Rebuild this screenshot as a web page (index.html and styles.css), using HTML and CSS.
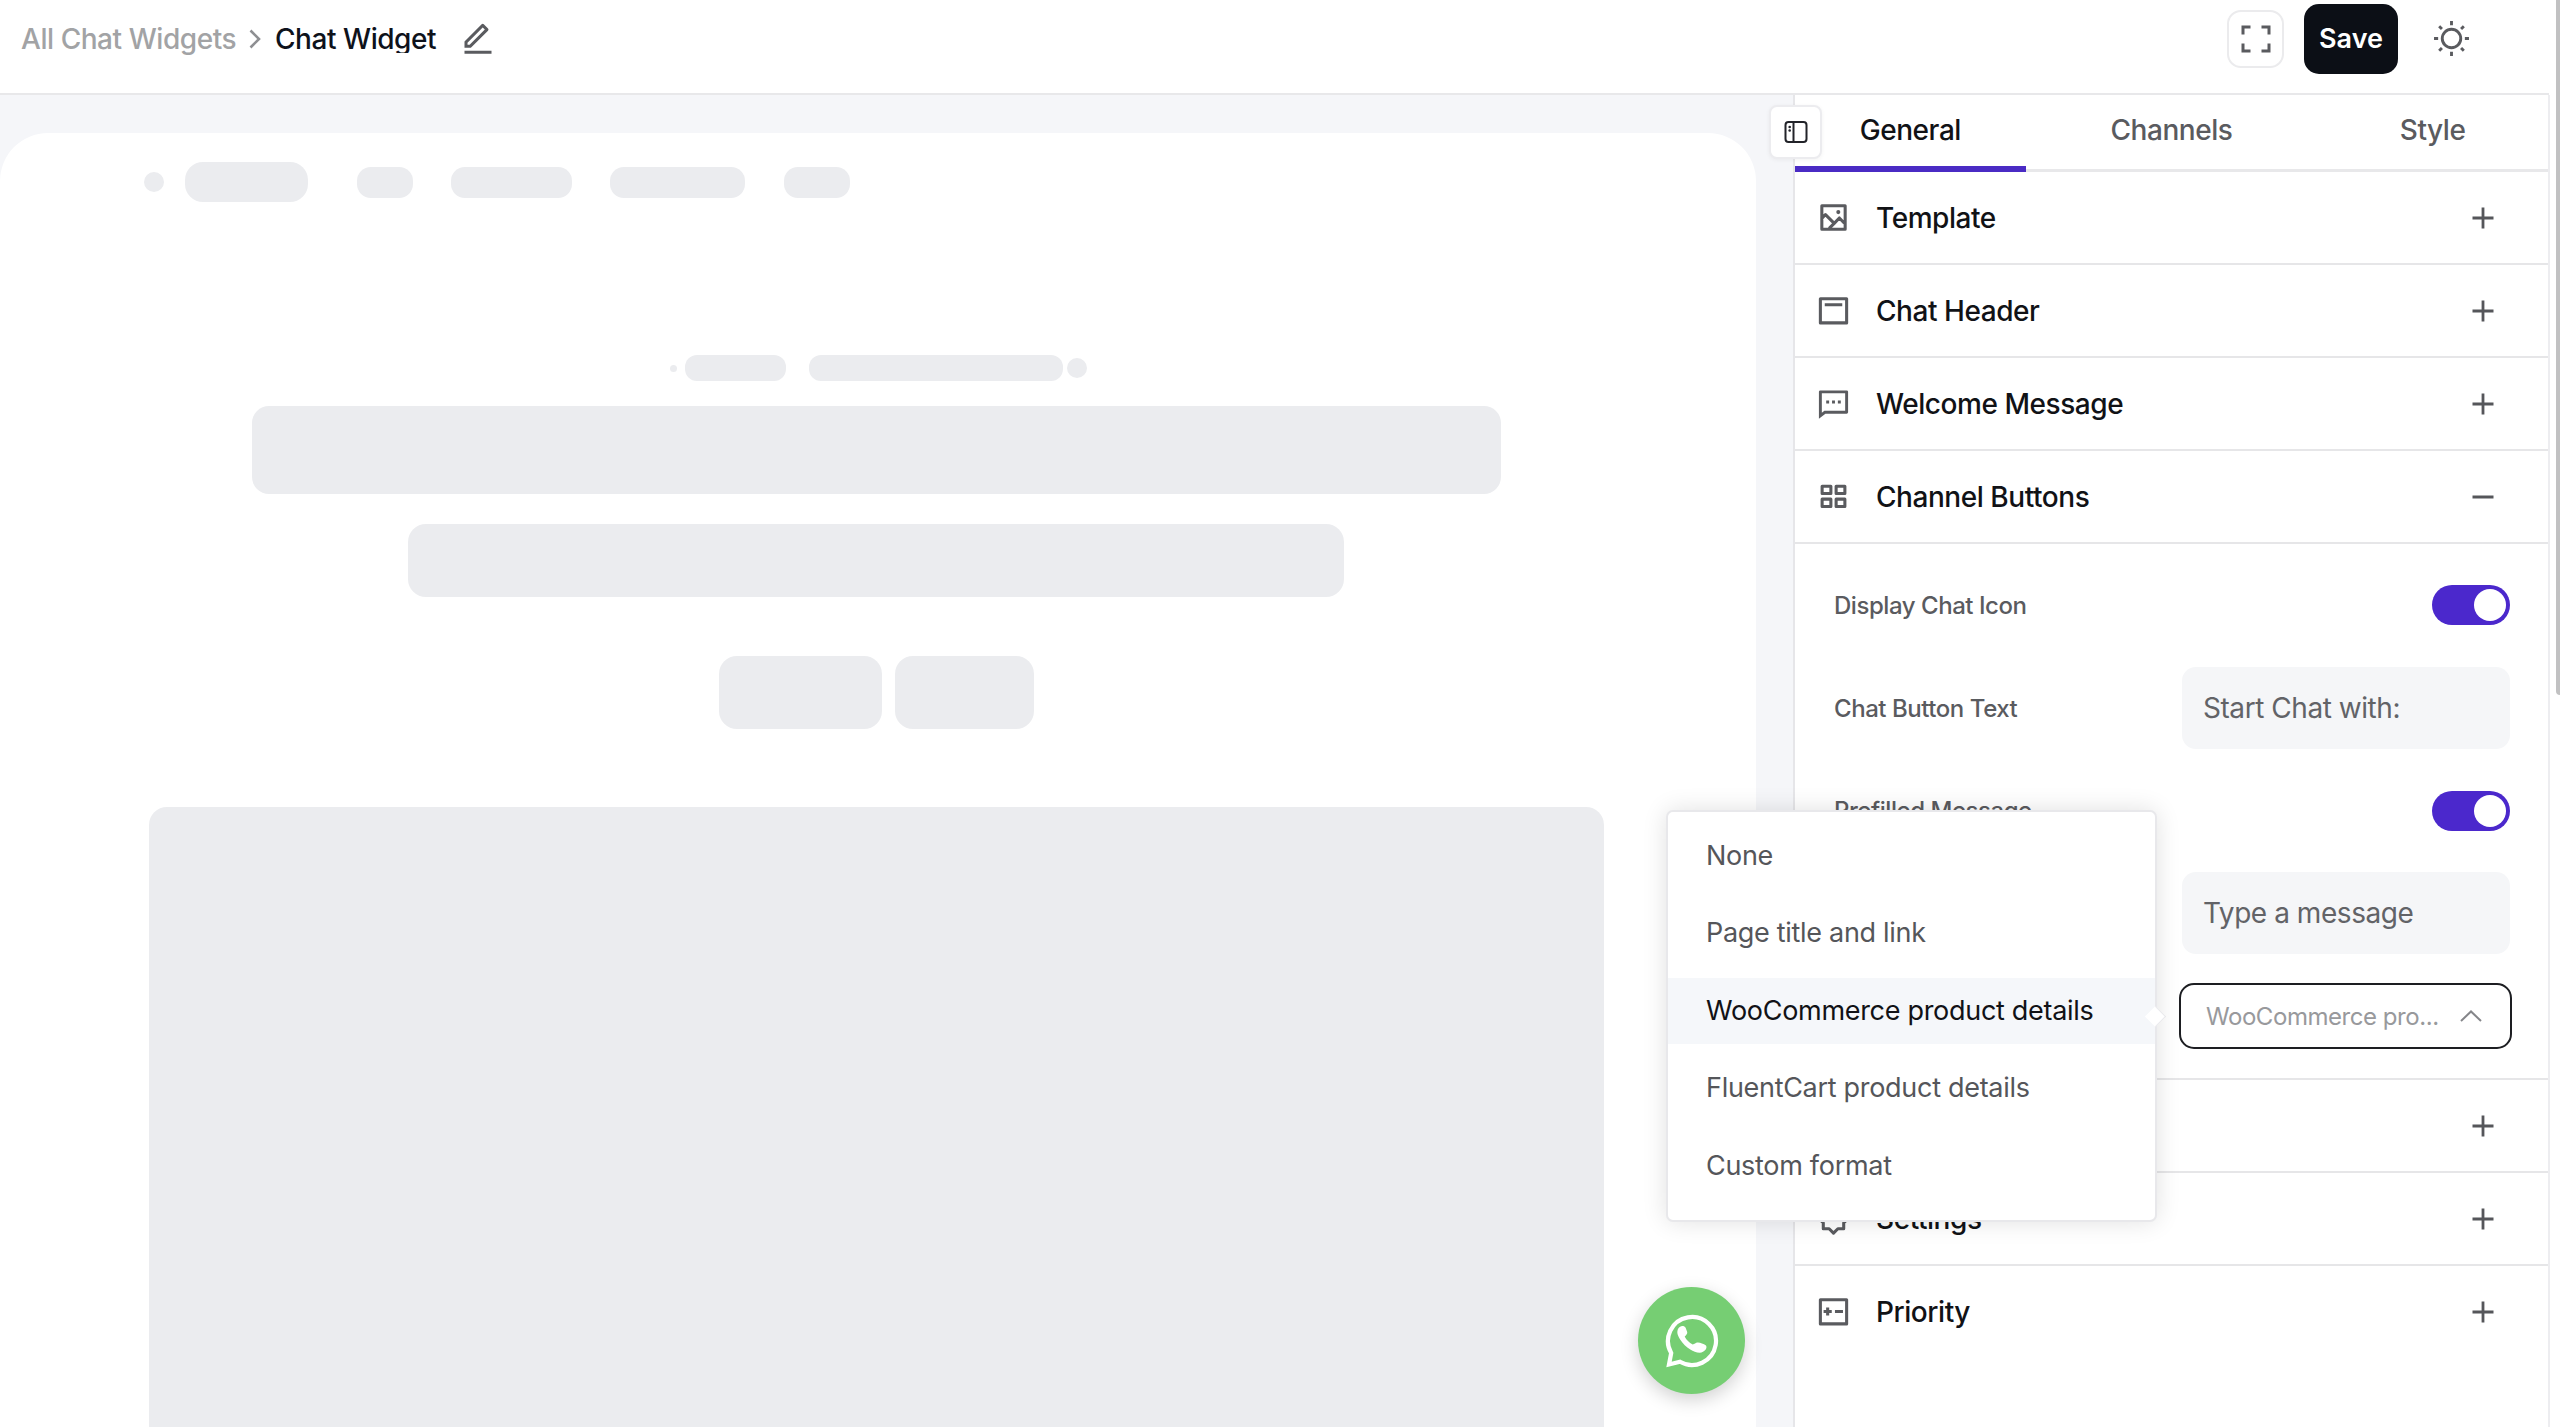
FILE: index.html
```html
<!DOCTYPE html>
<html lang="en">
<head>
  <meta charset="UTF-8" />
  <meta name="viewport" content="width=device-width, initial-scale=1.0" />
  <title>Chat Widget</title>
  <link rel="stylesheet" href="styles.css">
</head>
<body>
  <!-- shared icons -->
  <svg class="sprite">
    <symbol id="plus" viewBox="0 0 36 36"><path d="M18 7.5v21M7.5 18h21" stroke="currentColor" stroke-width="2.8" /></symbol>
    <symbol id="minus" viewBox="0 0 36 36"><path d="M7.5 18h21" stroke="currentColor" stroke-width="3" /></symbol>
  </svg>

  <div class="app">
    <header class="topbar">
      <nav class="breadcrumb">
        <a class="crumb">All Chat Widgets</a>
        <svg class="crumb-arrow" viewBox="0 0 12 20"><path d="M1.5 1.5L10 10l-8.500 8.500" /></svg>
        <span class="crumb-current">Chat Widget</span>
        <svg class="edit-icon" viewBox="0 0 24 24"><path d="M6.414 15.89L16.556 5.748l-1.414-1.414L5 14.476v1.414h1.414zm.829 2H3v-4.243L14.435 2.212a1 1 0 0 1 1.414 0l2.829 2.829a1 1 0 0 1 0 1.414L7.243 17.89zM3 19.89h18v2H3v-2z" /></svg>
      </nav>
      <div class="actions">
        <button class="btn-icon">
          <svg viewBox="0 0 30 28"><path d="M9.500 2H2v7.500M20.500 2H28v7.500M9.500 26H2v-7.500M20.500 26H28v-7.500" /></svg>
        </button>
        <button class="btn-save">Save</button>
        <svg class="sun" viewBox="0 0 36 36">
          <circle cx="18" cy="18" r="9" />
          <path d="M18 1v4M18 31v4M1 18h4M31 18h4M6 6l2.700 2.700M27.300 27.300L30 30M6 30l2.700-2.700M27.300 8.700L30 6" />
        </svg>
      </div>
    </header>

    <div class="main">
      <section class="preview">
        <div class="canvas">
          <div class="sk-nav">
            <span class="sk dot"></span>
            <span class="sk logo"></span>
            <span class="sk link-1"></span>
            <span class="sk link-2"></span>
            <span class="sk link-3"></span>
            <span class="sk link-4"></span>
          </div>
          <div class="sk-line">
            <span class="sk tiny"></span>
            <span class="sk short"></span>
            <span class="sk long"></span>
            <span class="sk round"></span>
          </div>
          <div class="sk title"></div>
          <div class="sk subtitle"></div>
          <div class="sk-buttons">
            <span class="sk cta-1"></span>
            <span class="sk cta-2"></span>
          </div>
          <div class="sk hero"></div>
        </div>
        <div class="fab">
          <svg viewBox="0 0 54 54">
            <path class="bubble" d="M6.200 39A24 24 0 1 1 15 47.800L4 50.500z" />
            <path class="phone" d="M17 12c2 0 3 .5 3.700 2l1.500 4c.4 1.800-.9 3-2.500 4.500 1.500 3.300 4.500 6.300 8 7.900 2-.2 3.300-2.400 5.300-1.900 2.500.3 5.500 1.300 8 3 .8 1 .5 2.800-.3 4-1.500 2-3.700 3.200-6 3.200-3.400 0-6.500-1.300-9.400-3.200-4-2.500-7.500-5.800-10-9.800-1.700-2.700-3-5-3-7.700.2-3 1.700-5.500 4.700-6z" />
          </svg>
        </div>
      </section>

      <aside class="panel">
        <button class="collapse">
          <svg viewBox="0 0 24 24"><rect x="1.500" y="2" width="21" height="20" rx="3" /><path d="M9.500 2v20" /><circle class="fill" cx="5.700" cy="7" r="1.300" /><circle class="fill" cx="5.700" cy="10.500" r="1.300" /></svg>
        </button>

        <div class="tabs">
          <a class="tab tab-general active">General</a>
          <a class="tab tab-channels">Channels</a>
          <a class="tab tab-style">Style</a>
        </div>

        <div class="section">
          <svg class="row-icon" viewBox="0 0 24 24"><path d="M4 4h16v16H4zM4 12.700l2.500-2.700 6 6L9 19.500M12.500 16l3.500-3.700 4 4.200" /><circle class="fill" cx="15.300" cy="8.300" r="1.400" /></svg>
          <span class="section-title">Template</span>
          <svg class="toggle-icon"><use href="#plus" /></svg>
        </div>
        <div class="section">
          <svg class="row-icon" viewBox="0 0 24 24"><path d="M3 4h18v16.500H3zM6 8h12" /></svg>
          <span class="section-title">Chat Header</span>
          <svg class="toggle-icon"><use href="#plus" /></svg>
        </div>
        <div class="section">
          <svg class="row-icon" viewBox="0 0 24 24"><path class="fill" d="M6.455 19L2 22.500V4a1 1 0 0 1 1-1h18a1 1 0 0 1 1 1v14a1 1 0 0 1-1 1H6.455zm-.692-2H20V5H4v13.385L5.763 17zM11 10h2v2h-2v-2zm-4 0h2v2H7v-2zm8 0h2v2h-2v-2z" /></svg>
          <span class="section-title">Welcome Message</span>
          <svg class="toggle-icon"><use href="#plus" /></svg>
        </div>
        <div class="section">
          <svg class="row-icon" viewBox="0 0 24 24"><path d="M4.200 5h6v5h-6zM13.800 5h6v5h-6zM4.200 13.800h6v5h-6zM13.800 13.800h6v5h-6z" /></svg>
          <span class="section-title">Channel Buttons</span>
          <svg class="toggle-icon"><use href="#minus" /></svg>
        </div>

        <div class="fields">
          <div class="field">
            <label class="field-label">Display Chat Icon</label>
            <span class="switch"></span>
          </div>
          <div class="field">
            <label class="field-label">Chat Button Text</label>
            <div class="input">Start Chat with:</div>
          </div>
          <div class="field">
            <label class="field-label">Prefilled Message</label>
            <span class="switch"></span>
          </div>
          <div class="field">
            <div class="input">Type a message</div>
          </div>
          <div class="field">
            <div class="select">
              <span class="select-value">WooCommerce pro...</span>
              <svg viewBox="0 0 22 12"><path d="M1 11L11 1.500 21 11" /></svg>
            </div>
          </div>
          <ul class="dropdown">
            <li>None</li>
            <li>Page title and link</li>
            <li class="selected">WooCommerce product details</li>
            <li>FluentCart product details</li>
            <li>Custom format</li>
          </ul>
        </div>

        <div class="section">
          <svg class="toggle-icon"><use href="#plus" /></svg>
        </div>
        <div class="section">
          <svg class="row-icon" viewBox="0 0 24 24"><path d="M12 2l3 3h4v4l3 3-3 3v4h-4l-3 3-3-3H5v-4l-3-3 3-3V5h4z" /></svg>
          <span class="section-title">Settings</span>
          <svg class="toggle-icon"><use href="#plus" /></svg>
        </div>
        <div class="section last">
          <svg class="row-icon" viewBox="0 0 24 24"><path d="M3 4h18v16.500H3zM5.200 12h5.600M8 9.200v5.600M13 12h5.500" /></svg>
          <span class="section-title">Priority</span>
          <svg class="toggle-icon"><use href="#plus" /></svg>
        </div>
      </aside>
      <div class="scrollbar"></div>
    </div>
  </div>
</body>
</html>
```
FILE: styles.css
```css
* {
  box-sizing: border-box;
}

body {
  margin: 0;
  height: 1427px;
  overflow: hidden;
  background: #fff;
  font-family: 'Inter', sans-serif;
  font-size: 28px;
  letter-spacing: -0.45px;
  color: #0e121b;
}

button {
  font-family: inherit;
  padding: 0;
}

.sprite {
  display: none;
}

.app {
  display: flex;
  flex-direction: column;
  height: 1427px;
}

/* top bar */
.topbar {
  display: flex;
  justify-content: space-between;
  width: 2549px;
  height: 95px;
  border-bottom: 2px solid #e8e8ea;
}

.breadcrumb {
  display: flex;
  align-items: center;
  height: 78px;
  padding-left: 21px;
  line-height: 28px;
  font-weight: 500;
}

.crumb {
  width: 216px;
  color: #a2a3a5;
  white-space: nowrap;
}

.crumb-arrow {
  width: 12px;
  height: 20px;
  margin: 0 14px 0 12px;
  fill: none;
  stroke: #8e8f92;
  stroke-width: 2.6;
}

.crumb-current {
  width: 165px;
  height: 28px;
  overflow: hidden;
  white-space: nowrap;
}

.edit-icon {
  width: 36px;
  height: 36px;
  margin-left: 20px;
  fill: #5a5b5f;
}

.actions {
  display: flex;
  align-items: center;
  height: 77px;
  padding-right: 79px;
}

.btn-icon {
  display: flex;
  align-items: center;
  justify-content: center;
  width: 57px;
  height: 58px;
  margin-right: 20px;
  background: #fff;
  border: 2px solid #ebebed;
  border-radius: 14px;
}

.btn-icon svg {
  width: 30px;
  height: 28px;
  fill: none;
  stroke: #5a5b5f;
  stroke-width: 3;
}

.btn-save {
  width: 94px;
  height: 70px;
  margin-right: 35px;
  background: #0c0f16;
  border: none;
  border-radius: 15px;
  color: #fff;
  font-size: 27px;
  font-weight: 600;
}

.sun {
  width: 37px;
  height: 37px;
  fill: none;
  stroke: #5a5b5f;
  stroke-width: 2.8;
}

.main {
  display: flex;
  flex: 1;
  min-height: 0;
}

/* preview */
.preview {
  position: relative;
  width: 1793px;
  padding-top: 38px;
  background: #f5f6f9;
  overflow: hidden;
}

.canvas {
  display: flex;
  flex-direction: column;
  align-items: center;
  width: 1756px;
  height: 1400px;
  padding-right: 4px;
  background: #fff;
  border-radius: 48px;
}

.sk {
  flex-shrink: 0;
  background: #ebecef;
}

.sk-nav {
  display: flex;
  align-items: center;
  align-self: flex-start;
  height: 40px;
  margin: 29px 0 0 144px;
}

.sk-nav .sk {
  height: 31px;
  border-radius: 14px;
}

.sk-nav .dot {
  width: 20px;
  height: 20px;
  border-radius: 50%;
}

.sk-nav .logo {
  width: 123px;
  height: 40px;
  margin: 0 49px 0 21px;
  border-radius: 18px;
}

.link-1 {
  width: 56px;
}

.link-2 {
  width: 121px;
  margin: 0 38px;
}

.link-3 {
  width: 135px;
}

.link-4 {
  width: 66px;
  margin-left: 39px;
}

.sk-line {
  display: flex;
  align-items: center;
  height: 26px;
  margin: 153px 0 25px 5px;
}

.sk-line .sk {
  height: 26px;
  border-radius: 12px;
}

.sk-line .tiny {
  width: 7px;
  height: 7px;
}

.sk-line .short {
  width: 101px;
  margin: 0 23px 0 8px;
}

.sk-line .long {
  width: 254px;
}

.sk-line .round {
  width: 20px;
  height: 20px;
  margin-left: 4px;
}

.title {
  width: 1249px;
  height: 88px;
  border-radius: 17px;
}

.subtitle {
  width: 936px;
  height: 73px;
  margin-top: 30px;
  border-radius: 18px;
}

.sk-buttons {
  display: flex;
  gap: 13px;
  height: 73px;
  margin: 59px 0 78px;
}

.sk-buttons .sk {
  border-radius: 18px;
}

.cta-1 {
  width: 163px;
}

.cta-2 {
  width: 139px;
}

.hero {
  width: 1455px;
  height: 700px;
  border-radius: 18px;
}

.fab {
  position: absolute;
  right: 48px;
  bottom: 33px;
  display: flex;
  align-items: center;
  justify-content: center;
  width: 107px;
  height: 107px;
  background: #76ce73;
  border-radius: 50%;
  box-shadow: 0 6px 18px rgba(0, 0, 0, 0.18);
}

.fab svg {
  width: 54px;
  height: 54px;
}

.bubble {
  fill: none;
  stroke: #fff;
  stroke-width: 4.2;
}

.phone {
  fill: #fff;
}

/* settings panel */
.panel {
  position: relative;
  width: 757px;
  background: #fff;
  border-left: 2px solid #e6e6e9;
  border-right: 2px solid #ededf0;
}

.collapse {
  position: absolute;
  top: 10px;
  left: -26px;
  display: flex;
  align-items: center;
  justify-content: center;
  width: 53px;
  height: 54px;
  background: #fff;
  border: 2px solid #ececef;
  border-radius: 8px;
  box-shadow: 0 1px 4px rgba(0, 0, 0, 0.05);
}

.collapse svg {
  width: 24px;
  height: 24px;
  fill: none;
  stroke: #222329;
  stroke-width: 2;
}

.collapse .fill {
  fill: #222329;
  stroke: none;
}

.tabs {
  display: flex;
  height: 77px;
  border-bottom: 3px solid #e8e8ea;
}

.tab {
  height: 77px;
  line-height: 71px;
  font-weight: 500;
  text-align: center;
  color: #5a5b5f;
}

.tab.active {
  color: #111216;
  border-bottom: 6px solid #4a2bc4;
}

.tab-general {
  width: 231px;
}

.tab-channels {
  width: 292px;
}

.tab-style {
  width: 231px;
}

.section {
  display: flex;
  align-items: center;
  height: 93px;
  padding: 0 47px 0 21px;
  border-bottom: 2px solid #e6e6e8;
}

.section.last {
  height: 91px;
  border-bottom: none;
}

.row-icon {
  width: 35px;
  height: 35px;
  margin-right: 25px;
  fill: none;
  stroke: #5a5b5f;
  stroke-width: 2.1;
  stroke-linejoin: round;
}

.row-icon .fill {
  fill: #5a5b5f;
  stroke: none;
}

.section-title {
  font-weight: 500;
  color: #111216;
}

.toggle-icon {
  width: 36px;
  height: 36px;
  margin-left: auto;
  color: #55565a;
}

/* channel buttons */
.fields {
  position: relative;
  height: 536px;
  padding: 10px 38px 0 39px;
  border-bottom: 2px solid #e6e6e8;
}

.field {
  display: flex;
  align-items: center;
  height: 102.7px;
}

.field-label {
  font-size: 24px;
  font-weight: 500;
  color: #5a5b5f;
}

.switch {
  width: 78px;
  height: 40px;
  margin-left: auto;
  padding: 4px;
  background: #4b28cc;
  border-radius: 20px;
}

.switch::after {
  content: '';
  display: block;
  width: 32px;
  height: 32px;
  margin-left: auto;
  background: #fff;
  border-radius: 50%;
}

.input {
  width: 328px;
  height: 82px;
  margin-left: auto;
  padding-left: 21px;
  line-height: 82px;
  background: #f5f6f8;
  border-radius: 14px;
  color: #626367;
}

.select {
  display: flex;
  align-items: center;
  justify-content: space-between;
  width: 333px;
  height: 66px;
  margin: 0 -2px 0 auto;
  padding: 0 28px 0 25px;
  border: 2px solid #1d1e22;
  border-radius: 15px;
  font-size: 24px;
  color: #98999c;
}

.select svg {
  width: 22px;
  height: 12px;
  fill: none;
  stroke: #85868a;
  stroke-width: 2;
}

.dropdown {
  position: absolute;
  top: 266px;
  left: -129px;
  width: 491px;
  height: 412px;
  margin: 0;
  padding: 11px 0;
  list-style: none;
  background: #fff;
  border: 2px solid #e8e8eb;
  border-radius: 7px;
  box-shadow: 0 0 24px rgba(0, 0, 0, 0.12);
}

.dropdown::after {
  content: '';
  position: absolute;
  top: 197px;
  right: -8px;
  width: 14px;
  height: 14px;
  background: #fff;
  border: 1px solid #e8e8eb;
  border-left: none;
  border-bottom: none;
  transform: rotate(45deg);
}

.dropdown li {
  height: 66px;
  margin-bottom: 11.4px;
  padding-left: 38px;
  line-height: 66px;
  font-size: 27px;
  letter-spacing: -0.3px;
  color: #55565a;
}

.dropdown .selected {
  background: #f5f7fa;
  color: #111216;
}

.scrollbar {
  position: absolute;
  top: 0;
  right: 0;
  width: 4px;
  height: 695px;
  background: #c1c1c2;
  border-bottom-left-radius: 4px;
}
```
